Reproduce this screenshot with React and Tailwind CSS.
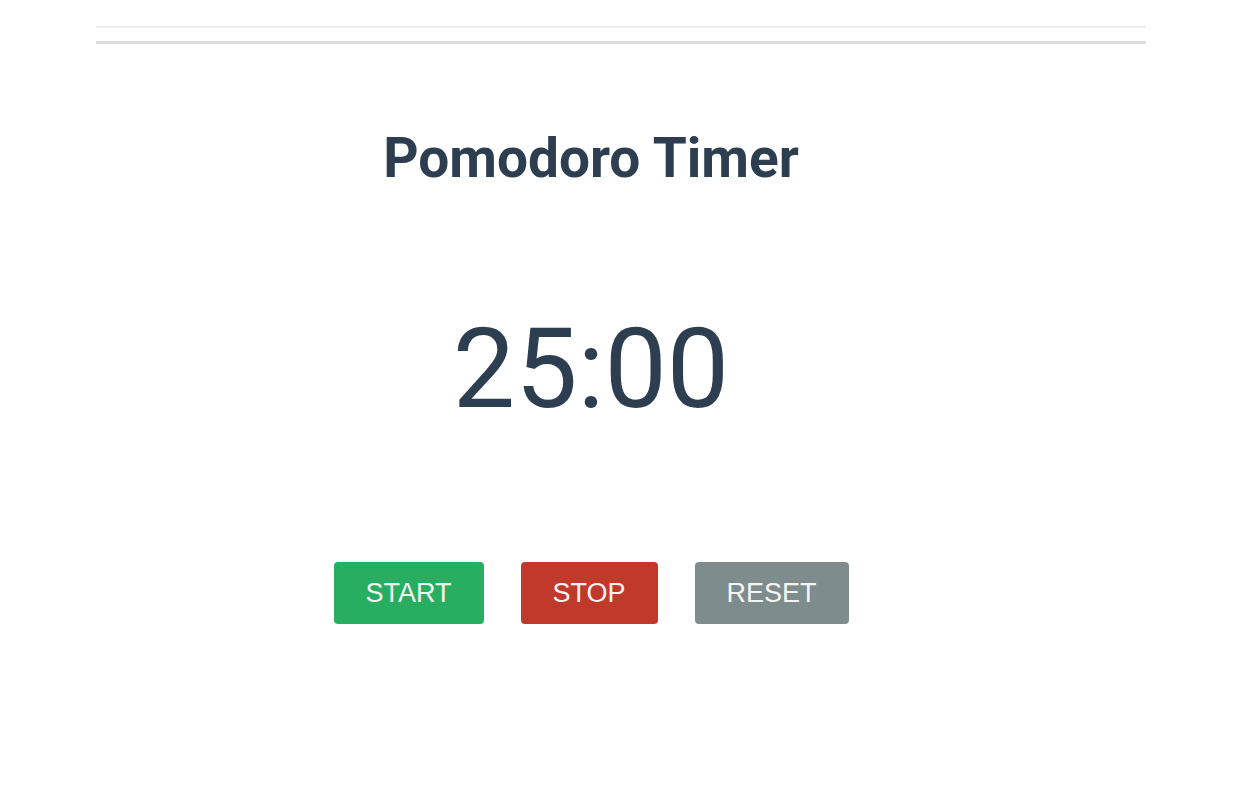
export default function App() {
  return (
    <div className="min-h-[787px] bg-white" style={{ fontFamily: 'Roboto, "Liberation Sans", sans-serif' }}>
      <div className="mx-[96px] w-[1050px] pt-[26px]">
        <div className="h-[2px] bg-[#ededed]" />
        <div className="mt-[13px] h-[3px] bg-[#dcdcdc]" />
      </div>

      <div className="flex w-[1182px] flex-col items-center">
        <h1 className="mt-[84px] text-[55px] font-bold leading-[60px] text-[#2c3e50]">Pomodoro Timer</h1>

        <div className="mt-[116px] text-[111px] font-normal leading-[130px] text-[#2c3e50]">25:00</div>

        <div className="mt-[128px] flex gap-[37px]" style={{ fontFamily: '"Liberation Sans", Arial, sans-serif' }}>
          <button className="h-[62px] w-[150px] rounded-[4px] bg-[#27ae60] text-[27px] text-[#f5f5f5]">START</button>
          <button className="h-[62px] w-[137px] rounded-[4px] bg-[#c0392b] text-[27px] text-[#f5f5f5]">STOP</button>
          <button className="h-[62px] w-[154px] rounded-[4px] bg-[#7f8c8d] text-[27px] text-[#f5f5f5]">RESET</button>
        </div>
      </div>
    </div>
  );
}
